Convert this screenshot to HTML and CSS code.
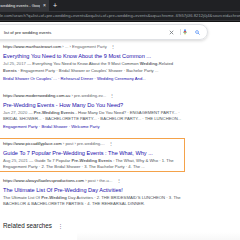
FILE: index.html
```html
<!DOCTYPE html>
<html lang="en">
<head>
<meta charset="utf-8">
<title>list of pre wedding events - Google Search</title>
<link rel="stylesheet" href="styles.css">
</head>
<body>
<header class="browser">
  <div class="tabstrip">
    <div class="tab">
      <span class="tab-title">list of pre wedding events - Google Search</span>
      <span class="tab-close">×</span>
    </div>
    <span class="newtab">+</span>
  </div>
  <div class="toolbar">
    <div class="omnibox">www.google.com/search?q=list+of+pre+wedding+events&amp;oq=list+of+pre+wedding+events&amp;aqs=chrome..69i57j0l6.8212j0j4&amp;sourceid=chrome&amp;ie=UTF-8</div>
  </div>
</header>
<main class="page">
  <div class="searchbox">
    <span class="query">list of pre wedding events</span>
    <span class="sb-icons">
      <svg class="ic-clear" viewBox="0 0 10 10" width="5" height="5"><path d="M1.5 1.5 L8.5 8.5 M8.5 1.5 L1.5 8.5" stroke="#70757a" stroke-width="1.6" fill="none"/></svg>
      <span class="sb-divider"></span>
      <svg class="ic-mic" viewBox="0 0 12 18" width="4" height="6">
        <rect x="3.5" y="0.5" width="5" height="10" rx="2.5" fill="#4285f4"/>
        <path d="M1.5 8 Q1.5 13 6 13 Q10.5 13 10.5 8" stroke="#34a853" stroke-width="1.8" fill="none"/>
        <path d="M6 13 V17" stroke="#fbbc05" stroke-width="1.8"/>
        <path d="M3.5 6 H8.5 V8 Q8.5 10.5 6 10.5 Q3.5 10.5 3.5 8 Z" fill="#ea4335"/>
      </svg>
      <svg class="ic-search" viewBox="0 0 12 12" width="5" height="5"><circle cx="4.8" cy="4.8" r="3.4" stroke="#4285f4" stroke-width="1.6" fill="none"/><path d="M7.3 7.3 L11 11" stroke="#4285f4" stroke-width="1.8"/></svg>
    </span>
  </div>

  <div class="results">
    <div class="result">
      <div class="cite"><span class="host">https://www.marthastewart.com</span> › ... › Engagement Party <span class="dots">⋮</span></div>
      <div class="rtitle">Everything You Need to Know About the 9 Most Common ...</div>
      <div class="snip"><span class="date">Jul 25, 2017 — </span>Everything You Need to Know About the 9 Most Common <b>Wedding</b>-Related</div>
      <div class="snip"><b>Events</b> · Engagement Party · Bridal Shower or Couples' Shower · Bachelor Party ...</div>
      <div class="sitelinks">Bridal Shower Or Couples' ... · Rehearsal Dinner · Wedding Ceremony And...</div>
    </div>

    <div class="result">
      <div class="cite"><span class="host">https://www.modernwedding.com.au</span> › pre-wedding-ev... <span class="dots">⋮</span></div>
      <div class="rtitle">Pre-Wedding Events - How Many Do You Need?</div>
      <div class="snip"><span class="date">Jan 27, 2020 — </span><b>Pre-Wedding Events</b> - How Many Do You Need? · ENGAGEMENT PARTY... ·</div>
      <div class="snip">BRIDAL SHOWER... · BACHELORETTE PARTY... · BACHELOR PARTY... · THE LUNCHEON...</div>
      <div class="sitelinks">Engagement Party · Bridal Shower · Welcome Party</div>
    </div>

    <div class="result highlighted">
      <div class="cite"><span class="host">https://www.piccadillyplace.com</span> › post › pre-wedding-... <span class="dots">⋮</span></div>
      <div class="rtitle">Guide To 7 Popular Pre-Wedding Events : The What, Why ...</div>
      <div class="snip"><span class="date">Aug 25, 2021 — </span>Guide To 7 Popular <b>Pre-Wedding Events</b> : The What, Why &amp; Who · 1. The</div>
      <div class="snip">Engagement Party · 2. The Bridal Shower · 3. The Bachelor Party · 4. The ...</div>
    </div>

    <div class="result">
      <div class="cite"><span class="host">https://www.alwaysflawlessproductions.com</span> › post › the-u... <span class="dots">⋮</span></div>
      <div class="rtitle">The Ultimate List Of Pre-Wedding Day Activities!</div>
      <div class="snip">The Ultimate List Of <b>Pre-Wedding</b> Day Activities · 2. THE BRIDESMAID'S LUNCHEON · 3. The</div>
      <div class="snip">BACHELOR &amp; BACHELORETTE PARTIES · 4. THE REHEARSAL DINNER.</div>
    </div>
  </div>

  <h2 class="related">Related searches <span class="dots">⋮</span></h2>
  <div class="related-row">
    <div class="related-item">pre wedding events list</div>
    <div class="related-card"></div>
  </div>
</main>
</body>
</html>
```

FILE: styles.css
```css
* { box-sizing: border-box; margin: 0; padding: 0; }
html, body { width: 240px; height: 240px; overflow: hidden; background: #fff; }
body { font-family: "Liberation Sans", Arial, sans-serif; color: #202124; }

.tabstrip { height: 11px; background: #202124; display: flex; align-items: stretch; }
.tab { width: 49px; background: #35363a; display: flex; align-items: center; padding-right: 3px; overflow: hidden; }
.tab-title { flex: 1; min-width: 0; white-space: nowrap; overflow: hidden; font-size: 4px; line-height: 11px; color: #e8eaed; text-indent: -17px; }
.tab-close { font-size: 5px; color: #e8eaed; line-height: 11px; margin-left: 3px; }
.newtab { font-size: 7px; line-height: 11px; color: #e8eaed; margin-left: 4px; }

.toolbar { height: 11px; background: #35363a; border-bottom: 1px solid #111; padding-top: 1px; }
.omnibox { height: 8px; background: #202124; font-size: 4.2px; line-height: 8px; color: #9aa0a6; white-space: nowrap; overflow: hidden; text-indent: -19.6px; }

.page { padding: 2px 0 0 3px; }

.searchbox { margin-left: -24px; width: 229px; height: 16px; border: 1px solid #dfe1e5; border-radius: 8px; box-shadow: 0 1px 3px rgba(32,33,36,0.18); display: flex; align-items: center; padding-left: 24px; padding-right: 7px; }
.query { flex: 1; font-size: 4.2px; color: #202124; white-space: nowrap; }
.sb-icons { display: flex; align-items: center; }
.ic-clear { margin-right: 6px; }
.sb-divider { width: 1px; height: 6px; background: #dadce0; margin-right: 2px; }
.ic-mic { margin-right: 8px; }

.results { margin-top: 4px; display: flex; flex-direction: column; gap: 11px; }
.result { white-space: nowrap; }
.result.highlighted { margin: -3.3px 0 -5px -4px; width: 186px; border: 1px solid #f4a24a; padding: 2px 0 0 3px; }

.cite { font-size: 4.2px; line-height: 6px; color: #5f6368; }
.cite .host { color: #202124; }
.cite .dots { margin-left: 3px; color: #70757a; }
.rtitle { font-size: 5.6px; line-height: 9px; margin-top: 2px; color: #1a0dab; }
.snip { font-size: 4.2px; line-height: 6.5px; color: #4d5156; }
.snip .date { color: #70757a; }
.snip b { font-weight: bold; color: #5f6368; }
.sitelinks { font-size: 4.2px; line-height: 6px; color: #1a0dab; margin-top: 1.5px; }

.related { margin-top: 14px; font-size: 6.3px; line-height: 8px; font-weight: normal; color: #202124; }
.related .dots { font-size: 5px; margin-left: 4px; color: #70757a; }

.related-row { margin-top: 2px; display: flex; gap: 4px; }
.related-item { width: 70px; font-size: 4.2px; line-height: 10px; color: #202124; padding-top: 5px; }
.related-card { flex: 1; height: 20px; background: linear-gradient(to bottom, #ffffff, #ececec); border-radius: 3px 0 0 0; }
```
